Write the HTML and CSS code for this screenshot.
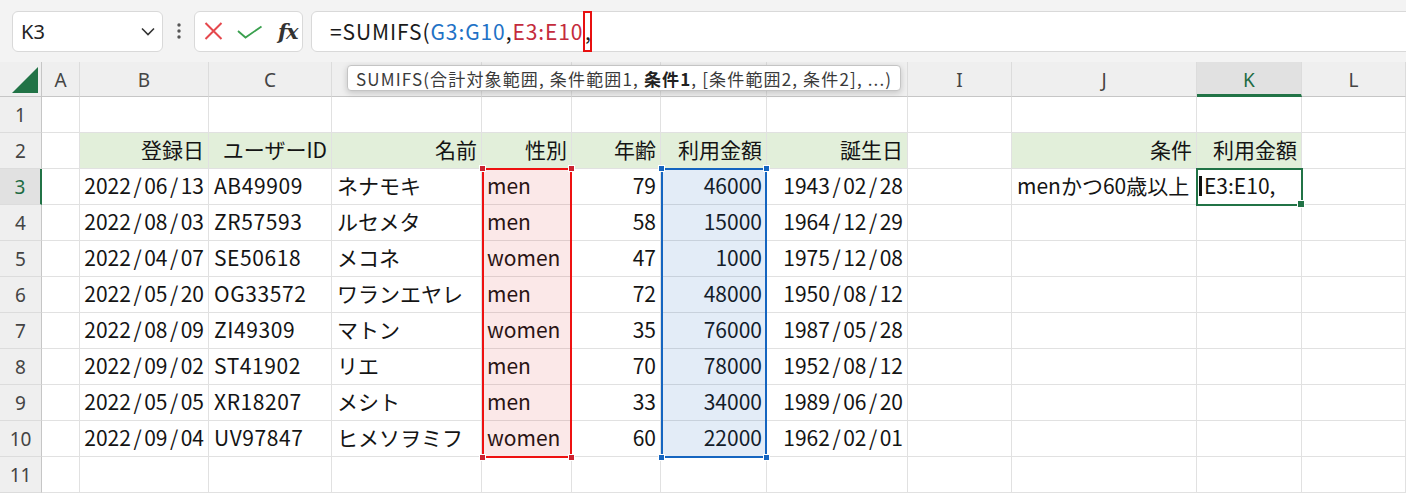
FILE: index.html
```html
<!DOCTYPE html>
<html lang="ja">
<head>
<meta charset="utf-8">
<title>SUMIFS</title>
<link rel="stylesheet" href="styles.css">
</head>
<body>
<div class="topbar">
  <div class="namebox">
    <span class="nb-text">K3</span>
    <svg class="chev" width="14" height="9" viewBox="0 0 14 9"><path d="M1 1.5 L7 7.5 L13 1.5" fill="none" stroke="#333" stroke-width="1.6"/></svg>
  </div>
  <div class="dots">
    <svg width="6" height="18" viewBox="0 0 6 18"><circle cx="3" cy="3" r="1.7" fill="#555"/><circle cx="3" cy="9" r="1.7" fill="#555"/><circle cx="3" cy="15" r="1.7" fill="#555"/></svg>
  </div>
  <div class="fnbox">
    <svg class="ic-x" width="19" height="18" viewBox="0 0 19 18"><path d="M1.5 1 L17.5 17 M17.5 1 L1.5 17" stroke="#e5484d" stroke-width="2" fill="none"/></svg>
    <svg class="ic-ok" width="26" height="14" viewBox="0 0 26 14"><path d="M1 6 L8.5 12.5 L24.5 1.5" stroke="#3aa04e" stroke-width="1.8" fill="none"/></svg>
    <span class="fx">fx</span>
  </div>
  <div class="formula">
    <span class="f-plain">=SUMIFS(</span><span class="f-blue">G3:G10</span><span class="f-plain">,</span><span class="f-red">E3:E10</span><span class="f-cur">,</span>
  </div>
</div>

<div class="sheet">
  <div class="grid">
    <div class="corner"><svg width="28" height="28" viewBox="0 0 28 28"><path d="M27 1 L27 27 L1 27 Z" fill="#217346"/></svg></div>
    <div class="ch">A</div><div class="ch">B</div><div class="ch">C</div><div class="ch">D</div><div class="ch">E</div><div class="ch">F</div><div class="ch">G</div><div class="ch">H</div><div class="ch">I</div><div class="ch">J</div><div class="ch ch-sel">K</div><div class="ch">L</div>

    <div class="rh">1</div><div class="c"></div><div class="c"></div><div class="c"></div><div class="c"></div><div class="c"></div><div class="c"></div><div class="c"></div><div class="c"></div><div class="c"></div><div class="c"></div><div class="c"></div><div class="c"></div>

    <div class="rh">2</div><div class="c"></div><div class="c g r">登録日</div><div class="c g r">ユーザーID</div><div class="c g r">名前</div><div class="c g r">性別</div><div class="c g r">年齢</div><div class="c g r">利用金額</div><div class="c g r">誕生日</div><div class="c"></div><div class="c g r">条件</div><div class="c g r">利用金額</div><div class="c"></div>

    <div class="rh rh-sel">3</div><div class="c"></div><div class="c r">2022<span class="sl">/</span>06<span class="sl">/</span>13</div><div class="c id">AB49909</div><div class="c">ネナモキ</div><div class="c">men</div><div class="c r">79</div><div class="c r">46000</div><div class="c r">1943<span class="sl">/</span>02<span class="sl">/</span>28</div><div class="c"></div><div class="c">menかつ60歳以上</div><div class="c edit"><span class="caret"></span>E3:E10,</div><div class="c"></div>

    <div class="rh">4</div><div class="c"></div><div class="c r">2022<span class="sl">/</span>08<span class="sl">/</span>03</div><div class="c id">ZR57593</div><div class="c">ルセメタ</div><div class="c">men</div><div class="c r">58</div><div class="c r">15000</div><div class="c r">1964<span class="sl">/</span>12<span class="sl">/</span>29</div><div class="c"></div><div class="c"></div><div class="c"></div><div class="c"></div>

    <div class="rh">5</div><div class="c"></div><div class="c r">2022<span class="sl">/</span>04<span class="sl">/</span>07</div><div class="c id">SE50618</div><div class="c">メコネ</div><div class="c">women</div><div class="c r">47</div><div class="c r">1000</div><div class="c r">1975<span class="sl">/</span>12<span class="sl">/</span>08</div><div class="c"></div><div class="c"></div><div class="c"></div><div class="c"></div>

    <div class="rh">6</div><div class="c"></div><div class="c r">2022<span class="sl">/</span>05<span class="sl">/</span>20</div><div class="c id">OG33572</div><div class="c">ワランエヤレ</div><div class="c">men</div><div class="c r">72</div><div class="c r">48000</div><div class="c r">1950<span class="sl">/</span>08<span class="sl">/</span>12</div><div class="c"></div><div class="c"></div><div class="c"></div><div class="c"></div>

    <div class="rh">7</div><div class="c"></div><div class="c r">2022<span class="sl">/</span>08<span class="sl">/</span>09</div><div class="c id">ZI49309</div><div class="c">マトン</div><div class="c">women</div><div class="c r">35</div><div class="c r">76000</div><div class="c r">1987<span class="sl">/</span>05<span class="sl">/</span>28</div><div class="c"></div><div class="c"></div><div class="c"></div><div class="c"></div>

    <div class="rh">8</div><div class="c"></div><div class="c r">2022<span class="sl">/</span>09<span class="sl">/</span>02</div><div class="c id">ST41902</div><div class="c">リエ</div><div class="c">men</div><div class="c r">70</div><div class="c r">78000</div><div class="c r">1952<span class="sl">/</span>08<span class="sl">/</span>12</div><div class="c"></div><div class="c"></div><div class="c"></div><div class="c"></div>

    <div class="rh">9</div><div class="c"></div><div class="c r">2022<span class="sl">/</span>05<span class="sl">/</span>05</div><div class="c id">XR18207</div><div class="c">メシト</div><div class="c">men</div><div class="c r">33</div><div class="c r">34000</div><div class="c r">1989<span class="sl">/</span>06<span class="sl">/</span>20</div><div class="c"></div><div class="c"></div><div class="c"></div><div class="c"></div>

    <div class="rh">10</div><div class="c"></div><div class="c r">2022<span class="sl">/</span>09<span class="sl">/</span>04</div><div class="c id">UV97847</div><div class="c">ヒメソヲミフ</div><div class="c">women</div><div class="c r">60</div><div class="c r">22000</div><div class="c r">1962<span class="sl">/</span>02<span class="sl">/</span>01</div><div class="c"></div><div class="c"></div><div class="c"></div><div class="c"></div>

    <div class="rh">11</div><div class="c"></div><div class="c"></div><div class="c"></div><div class="c"></div><div class="c"></div><div class="c"></div><div class="c"></div><div class="c"></div><div class="c"></div><div class="c"></div><div class="c"></div><div class="c"></div>
  </div>

  <div class="grid layer">
    <div class="range range-red"><i class="h tl"></i><i class="h tr"></i><i class="h bl"></i><i class="h br"></i></div>
    <div class="range range-blue"><i class="h tl"></i><i class="h tr"></i><i class="h bl"></i><i class="h br"></i></div>
    <div class="active"><i class="fill"></i></div>
  </div>

  <div class="tooltip">SUMIFS(合計対象範囲, 条件範囲1, <b>条件1</b>, [条件範囲2, 条件2], ...)</div>
</div>
</body>
</html>
```

FILE: styles.css
```css
html, body {
  margin: 0;
  padding: 0;
}
body {
  width: 1406px;
  height: 494px;
  overflow: hidden;
  background: #ffffff;
  font-family: "Noto Sans CJK JP", "Noto Sans", sans-serif;
  color: #1a1a1a;
}

/* ---------- top formula bar ---------- */
.topbar {
  display: flex;
  align-items: center;
  height: 62px;
  box-sizing: border-box;
  padding-left: 12px;
  background: #f3f3f3;
}
.namebox {
  width: 151px;
  height: 41px;
  box-sizing: border-box;
  background: #fff;
  border: 1px solid #d9d9d9;
  border-radius: 6px;
  display: flex;
  align-items: center;
  justify-content: space-between;
  padding: 0 7px 0 8px;
  font-family: "Noto Sans", sans-serif;
  font-size: 20px;
  color: #222;
}
.dots {
  width: 31px;
  display: flex;
  justify-content: center;
  align-items: center;
}
.fnbox {
  width: 109px;
  height: 41px;
  box-sizing: border-box;
  background: #fff;
  border: 1px solid #d9d9d9;
  border-radius: 6px;
  display: flex;
  align-items: center;
  padding-left: 9px;
}
.ic-x { margin-right: 14px; }
.ic-ok { margin-right: 15px; margin-top: 1px; }
.fx {
  font-family: "DejaVu Serif", "Liberation Serif", serif;
  font-style: italic;
  font-weight: bold;
  font-size: 21px;
  color: #333;
  letter-spacing: -1px;
}
.formula {
  flex: 1;
  margin-left: 8px;
  margin-right: -20px;
  height: 41px;
  box-sizing: border-box;
  background: #fff;
  border: 1px solid #d9d9d9;
  border-radius: 6px;
  display: flex;
  align-items: center;
  padding-left: 18px;
  font-size: 21px;
  line-height: 1;
  letter-spacing: 0.9px;
  white-space: nowrap;
}
.f-plain { color: #1a1a1a; }
.f-blue { color: #1f72c6; }
.f-red { color: #c42b3c; }
.f-cur {
  display: inline-flex;
  align-items: center;
  justify-content: center;
  height: 41px;
  width: 9px;
  margin: -1px 0;
  box-sizing: border-box;
  border: 2px solid #e81010;
  letter-spacing: 0;
  color: #1a1a1a;
}

/* ---------- sheet ---------- */
.sheet {
  position: relative;
}
.grid {
  display: grid;
  grid-template-columns: 42px 38px 129px 123px 150px 90px 89px 106px 141px 104px 185px 105px 104px;
  grid-template-rows: 35px repeat(11, 36px);
}
.layer {
  position: absolute;
  inset: 0;
  pointer-events: none;
}
.corner {
  background: #efefef;
  border-right: 1px solid #c6c6c6;
  border-bottom: 1px solid #c6c6c6;
  box-sizing: border-box;
  display: flex;
  align-items: flex-end;
  justify-content: flex-end;
  padding: 0 2px 2px 0;
}
.ch {
  background: #efefef;
  border-right: 1px solid #dcdcdc;
  border-bottom: 1px solid #c6c6c6;
  box-sizing: border-box;
  display: flex;
  align-items: center;
  justify-content: center;
  font-family: "Noto Sans", sans-serif;
  font-size: 19px;
  color: #444;
  padding-top: 1px;
}
.ch-sel {
  background: #e1e1e1;
  border-bottom: 3px solid #217346;
  color: #1d6b43;
  padding-top: 3px;
}
.rh {
  background: #efefef;
  border-right: 1px solid #c6c6c6;
  border-bottom: 1px solid #dcdcdc;
  box-sizing: border-box;
  display: flex;
  align-items: center;
  justify-content: center;
  font-family: "Noto Sans", sans-serif;
  font-size: 19px;
  color: #444;
}
.rh-sel {
  background: #e1e1e1;
  border-right: 2px solid #217346;
  color: #1d6b43;
}
.c {
  border-right: 1px solid #e1e1e1;
  border-bottom: 1px solid #e1e1e1;
  box-sizing: border-box;
  display: flex;
  align-items: center;
  padding: 0 4px 2px 5px;
  font-size: 21px;
  line-height: 1;
  white-space: nowrap;
  color: #141414;
}
.r { justify-content: flex-end; }
.g { background: #e2efda; }
.id { letter-spacing: 0.6px; }
.sl { margin: 0 2.5px; }
.edit { padding-left: 2px; }
.caret {
  display: inline-block;
  width: 3px;
  height: 20px;
  background: #111;
  margin-right: 2px;
}

/* ---------- range overlays ---------- */
.range {
  position: relative;
  box-sizing: border-box;
  border: 2px solid;
}
.range-red {
  grid-column: 6 / 7;
  grid-row: 4 / 12;
  margin: -1px 0 -1px 0;
  border-color: #ee1111;
  background: rgba(215, 30, 30, 0.1);
}
.range-blue {
  grid-column: 8 / 9;
  grid-row: 4 / 12;
  margin: -1px 0 -1px 0;
  border-color: #1565c0;
  background: rgba(21, 101, 192, 0.12);
}
.h {
  position: absolute;
  width: 7px;
  height: 7px;
  box-sizing: border-box;
  border: 1px solid #fff;
}
.range-red .h { background: #cc2230; }
.range-blue .h { background: #1565c0; }
.tl { left: -5px; top: -5px; }
.tr { right: -5px; top: -5px; }
.bl { left: -5px; bottom: -5px; }
.br { right: -5px; bottom: -5px; }

.active {
  grid-column: 12 / 13;
  grid-row: 4 / 5;
  margin: -1px -1px -1px -1px;
  position: relative;
  border: 2px solid #217346;
}
.fill {
  position: absolute;
  right: -4px;
  bottom: -4px;
  width: 6px;
  height: 6px;
  background: #217346;
  border: 1px solid #fff;
}

/* ---------- tooltip ---------- */
.tooltip {
  position: absolute;
  left: 347px;
  top: 3px;
  height: 26px;
  box-sizing: border-box;
  padding: 0 8px;
  display: flex;
  align-items: center;
  background: #fff;
  border: 1px solid #c4c4c4;
  border-radius: 4px;
  box-shadow: 0 2px 6px rgba(0, 0, 0, 0.18);
  font-size: 17px;
  line-height: 1;
  letter-spacing: 1.15px;
  color: #3a3a3a;
  white-space: pre;
}
.tooltip b {
  font-weight: bold;
  color: #222;
}
```
